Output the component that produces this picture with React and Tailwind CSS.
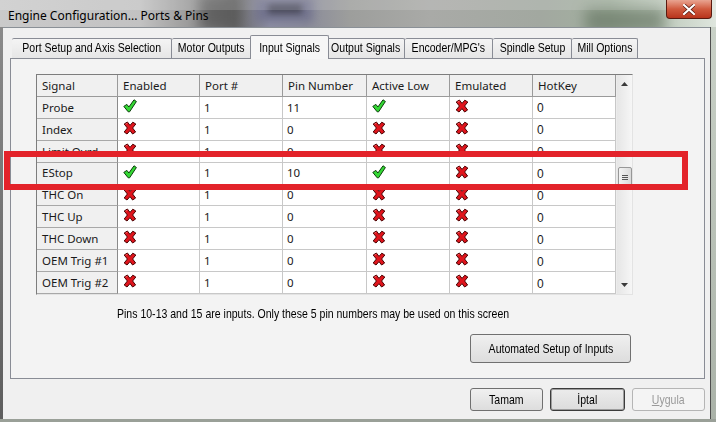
import React from "react";

const ui = "font-['Liberation_Sans',sans-serif]";
const gridFont = "font-['Noto_Sans','Liberation_Sans',sans-serif]";

// Condensed dialog label: Liberation Sans squeezed horizontally
function Narrow({ children, left = false }) {
  return (
    <span
      className={`inline-block whitespace-nowrap scale-x-[0.81] ${left ? "origin-left" : "origin-center"}`}
    >
      {children}
    </span>
  );
}

function Check() {
  return (
    <svg width="14" height="14" viewBox="0 0 14 14">
      <path
        d="M0.8 7.4 L3.9 5.4 L5.9 8 L11 0.8 L13.4 2.5 L6.6 12.8 L5.2 12.8 Z"
        fill="#34d834"
        stroke="#0b3f0b"
        strokeWidth="1"
        strokeLinejoin="round"
      />
    </svg>
  );
}

function Cross() {
  return (
    <svg width="14" height="14" viewBox="0 0 14 14">
      <path
        d="M1.2 3 L4.4 1 L7 4.4 L9.8 1.2 L12.8 3 L9.6 7 L12.6 11 L9.6 13 L7 9.6 L4 13 L1.2 11 L4.4 7 Z"
        fill="#e0141c"
        stroke="#4a0000"
        strokeWidth="1"
        strokeLinejoin="round"
      />
      <path d="M2.6 3.2 L4.4 2.2" stroke="#ff7a7a" strokeWidth="0.8" />
    </svg>
  );
}

const tabs = [
  { label: "Port Setup and Axis Selection", w: "w-[160px]" },
  { label: "Motor Outputs", w: "w-[80px]" },
  { label: "Input Signals", w: "w-[79px]", active: true },
  { label: "Output Signals", w: "w-[78px]" },
  { label: "Encoder/MPG's", w: "w-[88px]" },
  { label: "Spindle Setup", w: "w-[79px]" },
  { label: "Mill Options", w: "w-[66px]" },
];

const cols = ["w-[81px]", "w-[82px]", "w-[83px]", "w-[84px]", "w-[83px]", "w-[83px]", "w-[83px]"];
const headers = ["Signal", "Enabled", "Port #", "Pin Number", "Active Low", "Emulated", "HotKey"];

const rows = [
  { name: "Probe", en: true, pin: "11", low: true },
  { name: "Index", en: false, pin: "0", low: false },
  { name: "Limit Ovrd", en: false, pin: "0", low: false },
  { name: "EStop", en: true, pin: "10", low: true },
  { name: "THC On", en: false, pin: "0", low: false },
  { name: "THC Up", en: false, pin: "0", low: false },
  { name: "THC Down", en: false, pin: "0", low: false },
  { name: "OEM Trig #1", en: false, pin: "0", low: false },
  { name: "OEM Trig #2", en: false, pin: "0", low: false },
];

function Flag({ on }) {
  return <div className="pl-[5px] pt-[2px] h-full">{on ? <Check /> : <Cross />}</div>;
}

function Grid() {
  return (
    <div className={`flex w-[597px] h-[221px] border-t border-l border-[#7d7d7d] border-r border-b border-r-[#e3e3e3] border-b-[#e3e3e3] bg-white ${gridFont} text-[11.5px] text-[#1a1a1a]`}>
      <div className="flex flex-col">
        <div className="flex h-[22px]">
          {headers.map((h, i) => (
            <div
              key={h}
              className={`${cols[i]} h-full flex items-center pl-[5px] bg-[#f0f0f0] border-r border-b border-[#9a9a9a]`}
            >
              {h}
            </div>
          ))}
        </div>
        {rows.map((r) => (
          <div key={r.name} className="flex h-[22px]">
            <div className={`${cols[0]} h-full flex items-center pl-[5px] bg-[#f0f0f0] border-r border-r-[#8a8a8a] border-b border-b-[#a8a8a8]`}>
              {r.name}
            </div>
            <div className={`${cols[1]} h-full border-r border-b border-[#c8c8c8]`}>
              <Flag on={r.en} />
            </div>
            <div className={`${cols[2]} h-full flex items-center pl-[4px] border-r border-b border-[#c8c8c8]`}>1</div>
            <div className={`${cols[3]} h-full flex items-center pl-[4px] border-r border-b border-[#c8c8c8]`}>{r.pin}</div>
            <div className={`${cols[4]} h-full border-r border-b border-[#c8c8c8]`}>
              <Flag on={r.low} />
            </div>
            <div className={`${cols[5]} h-full border-r border-b border-[#c8c8c8]`}>
              <Flag on={false} />
            </div>
            <div className={`${cols[6]} h-full flex items-center pl-[4px] pt-[2px] border-r border-b border-[#c8c8c8] font-['Liberation_Sans',sans-serif] text-[12px]`}>0</div>
          </div>
        ))}
      </div>
      <div className="w-[16px] h-full flex flex-col items-center bg-gradient-to-r from-[#e6e6e6] to-[#f6f6f6] border-l border-[#ececec]">
        <div className="h-[18px] flex items-center justify-center">
          <svg width="7" height="4" viewBox="0 0 7 4">
            <path d="M0 4 L3.5 0 L7 4 Z" fill="#3a3a3a" />
          </svg>
        </div>
        <div className="h-[74px]" />
        <div className="w-[14px] h-[21px] rounded-[2px] border border-[#979797] bg-gradient-to-r from-[#f3f3f3] to-[#dadada] flex flex-col items-center justify-center gap-[1px]">
          <div className="w-[6px] h-px bg-[#555]" />
          <div className="w-[6px] h-px bg-[#555]" />
          <div className="w-[6px] h-px bg-[#555]" />
        </div>
        <div className="flex-1" />
        <div className="h-[18px] flex items-center justify-center">
          <svg width="7" height="4" viewBox="0 0 7 4">
            <path d="M0 0 L3.5 4 L7 0 Z" fill="#3a3a3a" />
          </svg>
        </div>
      </div>
    </div>
  );
}

function Button({ children, className = "", disabled = false, strong = false }) {
  return (
    <div
      className={`flex items-center justify-center rounded-[3px] border ${
        disabled
          ? "border-[#b5b5b5] bg-[#f4f4f4] text-[#9a9a9a]"
          : strong
          ? "border-[#3c3c3c] bg-gradient-to-b from-[#ececec] to-[#dcdcdc] text-black shadow-[inset_0_0_0_1px_#9d9d9d]"
          : "border-[#707070] bg-gradient-to-b from-[#f0f0f0] to-[#dddddd] text-black"
      } ${ui} text-[13px] ${className}`}
    >
      <Narrow>{children}</Narrow>
    </div>
  );
}

export default function App() {
  return (
    <div className="relative w-[716px] h-[422px] overflow-hidden flex flex-col bg-[#b9bdb8]">
      {/* glass title bar */}
      <div className="relative h-[27px] flex items-center overflow-hidden bg-[linear-gradient(to_right,#cacaca_0px,#c2c2c2_140px,#9a9a9a_190px,#6a6a6a_235px,#8d8ea3_270px,#8a8b9a_305px,#9d9e9c_350px,#a9aaa7_430px,#a2a8a0_540px,#a3b1a0_610px,#c3cec1_670px,#dfe6de_716px)]">
        <div className="absolute left-[200px] top-[-4px] w-[40px] h-[34px] bg-[#555] blur-[6px] opacity-70" />
        <div className="absolute left-[255px] top-[-2px] w-[58px] h-[24px] bg-[#6f708c] blur-[4px] opacity-80" />
        <div className="absolute left-[268px] top-[4px] w-[34px] h-[10px] bg-[#3c3c48] blur-[3px] opacity-70" />
        <div className="absolute left-[585px] top-[8px] w-[80px] h-[26px] bg-[#5e6e5b] blur-[7px] opacity-60" />
        <div className="absolute inset-x-0 top-0 h-[10px] bg-white/15" />
        <span className="relative pl-[8px] pt-[4px] font-['Noto_Sans','Liberation_Sans',sans-serif] text-[12px] text-black">
          Engine Configuration... Ports &amp; Pins
        </span>
        <div className="relative ml-auto mr-[4px] self-start w-[46px] h-[19px] rounded-b-[4px] border border-t-0 border-[#5a1a10] bg-gradient-to-b from-[#e8a491] via-[#d05a3e] to-[#b8341c] flex items-center justify-center">
          <svg width="12" height="11" viewBox="0 0 12 11">
            <path d="M1 1 L11 10 M11 1 L1 10" stroke="#5a1a10" strokeWidth="3.6" strokeLinecap="round" />
            <path d="M1 1 L11 10 M11 1 L1 10" stroke="#ffffff" strokeWidth="2.2" strokeLinecap="round" />
          </svg>
        </div>
      </div>

      <div className="flex-1 flex">
        <div className="w-[3px] bg-gradient-to-b from-[#8a8a8a] to-[#5e5e5e]" />
        {/* dialog client area */}
        <div className="w-[707px] flex flex-col bg-[#f0f0f0] border-t border-[#8a9096] pl-[7px] pr-[5px] pt-[7px]">
          {/* tab strip */}
          <div className={`flex items-end h-[23px] ${ui} text-[13px] text-black`}>
            <div className="w-[2px]" />
            {tabs.map((t) =>
              t.active ? (
                <div
                  key={t.label}
                  className={`${t.w} -mx-[2px] relative z-10 h-[24px] mb-[-1px] flex items-start justify-center pt-[2px] bg-[#f6f6f6] border border-b-0 border-[#898c95] rounded-t-[2px]`}
                >
                  <Narrow>{t.label}</Narrow>
                </div>
              ) : (
                <div
                  key={t.label}
                  className={`${t.w} h-[20px] flex items-center justify-center pb-[1px] bg-gradient-to-b from-[#f4f4f4] to-[#e6e6e6] border border-b-0 border-l-0 first:border-l border-[#898c95] rounded-t-[2px]`}
                >
                  <Narrow>{t.label}</Narrow>
                </div>
              )
            )}
          </div>

          {/* tab page */}
          <div className="h-[321px] border border-[#898c95] bg-[#f3f3f3] flex flex-col pl-[25px] pt-[15px]">
            <Grid />
            <div className={`mt-[12px] ml-[81px] ${ui} text-[13px] text-black leading-[14px]`}>
              <Narrow left>Pins 10-13 and 15 are inputs. Only these 5 pin numbers may be used on this screen</Narrow>
            </div>
            <Button className="mt-[13px] ml-[434px] w-[161px] h-[29px]">Automated Setup of Inputs</Button>
          </div>

          {/* dialog buttons */}
          <div className="mt-[9px] flex justify-end gap-[7px]">
            <Button className="w-[73px] h-[23px]">Tamam</Button>
            <Button strong className="w-[75px] h-[23px]">İptal</Button>
            <Button disabled className="w-[73px] h-[23px]">
              <span className="underline">U</span>ygula
            </Button>
          </div>
        </div>
        <div className="flex-1 border-l border-[#4e4e4e] bg-gradient-to-b from-[#c9d1c7] to-[#aab2a8]" />
      </div>
      <div className="h-[3px] bg-[#9aa098]" />

      {/* red highlight frame around the EStop row */}
      <div className="absolute left-[4px] top-[151px] w-[684px] h-[39px] border-[6px] border-[#e3232a]" />
    </div>
  );
}
